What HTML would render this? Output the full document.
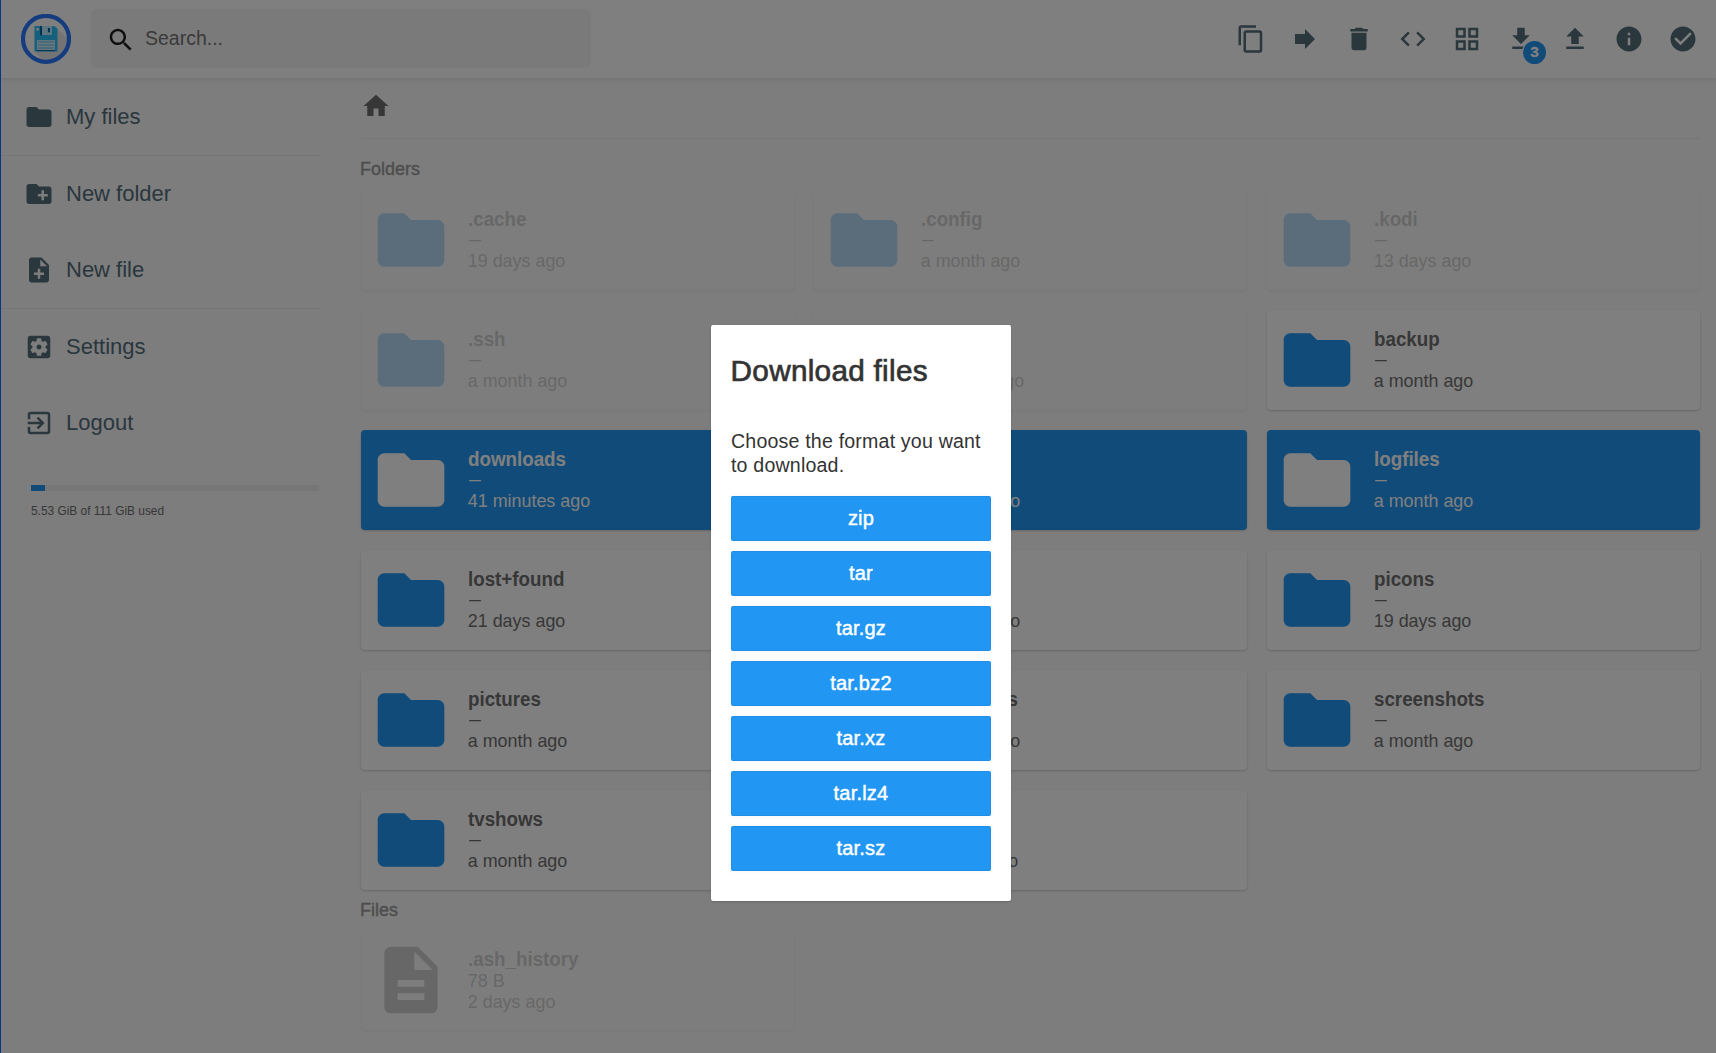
<!DOCTYPE html>
<html lang="en">
<head>
<meta charset="utf-8">
<title>File Browser</title>
<style>
*{box-sizing:border-box}
html,body{margin:0;padding:0}
body{width:1716px;height:1053px;overflow:hidden;position:relative;background:#fafafa;color:#333;font-family:"Liberation Sans",sans-serif;font-size:20px}
.abs,.abs-all>*{position:absolute}
svg{display:block}
/* header */
#header{position:absolute;left:1px;top:-1px;width:1719px;height:80px;background:#fff;border-bottom:1px solid rgba(0,0,0,.075);box-shadow:0 0 5px rgba(0,0,0,.1)}
#logo{position:absolute;left:20px;top:15px;width:50px;height:50px}
#search{position:absolute;left:90px;top:10px;width:500px;height:59px;background:#f5f5f5;border-radius:6px}
#search svg{position:absolute;left:15px;top:15.6px;width:30px;height:30px;fill:#000;opacity:.87}
#search span{position:absolute;left:54px;top:17px;line-height:24px;font-size:19.5px;color:#757575;white-space:nowrap}
.hi{position:absolute;top:25px;width:30px;height:30px;fill:#546e7a}
#badge{position:absolute;left:1521.8px;top:41.8px;width:23.3px;height:23.3px;border-radius:50%;background:#2196f3;color:#fff;font-size:15.4px;font-weight:bold;text-align:center;line-height:22.3px;box-shadow:0 0 0 1px #fff;-webkit-text-stroke:.3px #fff}
/* nav */
#nav{position:absolute;left:1px;top:79px;width:320px}
.na{position:absolute;left:0;width:320px;height:76px;color:#546e7a;font-size:22px}
.na svg{position:absolute;left:23px;top:23px;width:30px;height:30px;fill:#546e7a}
.na span{position:absolute;left:65px;top:23.8px;line-height:28px;white-space:nowrap}
.sep{position:absolute;left:0;width:320px;height:1px;background:rgba(0,0,0,.05)}
#usage-bar{position:absolute;left:30.2px;top:406.3px;width:288px;height:5.7px;background:rgba(0,0,0,.045)}
#usage-bar i{display:block;width:13.8px;height:5.7px;background:#2196f3}
#usage-txt{position:absolute;left:30px;top:424.6px;font-size:11.9px;line-height:14px;color:#6f6f6f;white-space:nowrap}
/* main */
#crumbs{position:absolute;left:361px;top:79px;width:1339px;height:60px;border-bottom:1px solid rgba(0,0,0,.05)}
#crumbs svg{position:absolute;left:.1px;top:12.1px;width:30px;height:30px;fill:#6f6f6f}
.h2{position:absolute;left:360px;font-size:18px;line-height:21px;color:#9b9b9b;font-weight:normal;white-space:nowrap;-webkit-text-stroke:.35px #9b9b9b}
.item{position:absolute;width:433.4px;height:100px;background:#fff;border-radius:4px;box-shadow:rgba(0,0,0,.06) 0 1px 3px,rgba(0,0,0,.12) 0 1px 2px;color:#6f6f6f}
.item svg{position:absolute;left:10px;top:10px;width:80px;height:80px;fill:#2196f3}
.item p{position:absolute;left:106.8px;margin:0;white-space:nowrap}
.item .name{top:16.8px;font-size:20px;line-height:24px;font-weight:bold;transform:scaleX(.938);transform-origin:0 50%}
.item .size{top:39.7px;font-size:17.9px;line-height:21px}
.item .mod{top:60.8px;font-size:17.9px;line-height:21px}
.item .size b{display:inline-block;font-weight:normal;transform:scaleX(.66);transform-origin:0 50%;position:relative;left:.9px;top:-.7px}
.item.sel{background:#2196f3;color:#fff}
.item.sel svg{fill:#fff}
.item.dim{opacity:.3}
.item.filei svg{fill:#6f6f6f}
.item.filei .size{top:40.5px}
.item.filei .mod{top:61.8px}
.c1{left:361px}.c2{left:814px}.c3{left:1267px}
.r1{top:190px}.r2{top:310px}.r3{top:430px}.r4{top:550px}.r5{top:670px}.r6{top:790px}.r7{top:930px}
/* overlay + modal */
#overlay{position:absolute;left:1px;top:0;width:1715px;height:1053px;background:rgba(0,0,0,.5)}
#winborder{position:absolute;left:0;top:0;width:1px;height:1053px;background:#0c3583}
#modal{position:absolute;left:711px;top:325px;width:300px;height:575.5px;background:#fff;border-radius:2px;box-shadow:rgba(0,0,0,.06) 0 1px 3px,rgba(0,0,0,.12) 0 1px 2px}
#modal h2{position:absolute;left:19.6px;top:28.1px;margin:0;font-size:29.7px;line-height:36px;font-weight:normal;color:#333;white-space:nowrap;-webkit-text-stroke:.7px #333;letter-spacing:.3px}
#modal p{position:absolute;left:20px;top:105.3px;margin:0;font-size:19.6px;line-height:23.2px;color:#333;white-space:nowrap;letter-spacing:.18px}
.btn{position:absolute;left:20px;width:260px;height:44.5px;background:#2196f3;border:1px solid rgba(0,0,0,.05);border-radius:2px;box-shadow:0 0 5px rgba(0,0,0,.05);color:#fff;text-align:center;font-size:20px;line-height:42.5px;-webkit-text-stroke:.45px #fff;letter-spacing:.2px}
</style>
</head>
<body>
<div id="header">
<svg id="logo" viewBox="0 0 50 50">
<defs><clipPath id="lc"><circle cx="25" cy="24.8" r="21.5"/></clipPath></defs>
<circle cx="25" cy="24.8" r="23" fill="#fff"/>
<g clip-path="url(#lc)"><path d="M13.5 37.5 L36.45 15 L60 38.6 L37 61z" fill="#000" opacity=".09"/></g>
<path d="M13.5 12h19.6l3.35 2.5v23H13.5z" fill="#28c0fb"/>
<rect x="19" y="12" width="2.1" height="9.4" fill="#0064a0"/>
<rect x="21.1" y="12" width="9.9" height="9" fill="#bcecff"/>
<rect x="26.9" y="14" width="2.1" height="4.3" fill="#0064a0"/>
<circle cx="16.5" cy="15.4" r="1.3" fill="#fff"/>
<rect x="16.1" y="26.1" width="17.8" height="10" fill="#cdf2ff"/>
<rect x="17.1" y="27.05" width="15.8" height="1.65" fill="#8cd0f4"/><rect x="17.1" y="30.2" width="15.8" height="1.6" fill="#8cd0f4"/><rect x="17.1" y="33.2" width="15.8" height="1.65" fill="#8cd0f4"/>
<rect x="16.1" y="36.1" width="17.8" height="1" fill="#0064a0"/>
<circle cx="25" cy="24.8" r="23" fill="none" stroke="#2979ff" stroke-width="4.2"/>
</svg>
<div id="search"><svg viewBox="0 0 24 24"><path d="M15.5 14h-.79l-.28-.27C15.41 12.59 16 11.11 16 9.5 16 5.91 13.09 3 9.5 3S3 5.91 3 9.5 5.91 16 9.5 16c1.61 0 3.09-.59 4.23-1.57l.27.28v.79l5 4.99L20.49 19l-4.99-5zm-6 0C7.01 14 5 11.99 5 9.5S7.01 5 9.5 5 14 7.01 14 9.5 11.99 14 9.5 14z"/></svg><span>Search...</span></div>
<svg class="hi" style="left:1235.1px" viewBox="0 0 24 24"><path d="M16 1H4c-1.1 0-2 .9-2 2v14h2V3h12V1zm3 4H8c-1.1 0-2 .9-2 2v14c0 1.1.9 2 2 2h11c1.1 0 2-.9 2-2V7c0-1.1-.9-2-2-2zm0 16H8V7h11v14z"/></svg>
<svg class="hi" style="left:1289.1px" viewBox="0 0 24 24"><path d="M12 8V4l8 8-8 8v-4H4V8z"/></svg>
<svg class="hi" style="left:1343.1px" viewBox="0 0 24 24"><path d="M6 19c0 1.1.9 2 2 2h8c1.1 0 2-.9 2-2V7H6v12zM19 4h-3.5l-1-1h-5l-1 1H5v2h14V4z"/></svg>
<svg class="hi" style="left:1397.1px" viewBox="0 0 24 24"><path d="M9.4 16.6L4.8 12l4.6-4.6L8 6l-6 6 6 6 1.4-1.4zm5.2 0l4.6-4.6-4.6-4.6L16 6l6 6-6 6-1.4-1.4z"/></svg>
<svg class="hi" style="left:1451.1px" viewBox="0 0 24 24"><path d="M3 3v8h8V3H3zm6 6H5V5h4v4zm-6 4v8h8v-8H3zm6 6H5v-4h4v4zm4-16v8h8V3h-8zm6 6h-4V5h4v4zm-6 4v8h8v-8h-8zm6 6h-4v-4h4v4z"/></svg>
<svg class="hi" style="left:1505.1px" viewBox="0 0 24 24"><path d="M19 9h-4V3H9v6H5l7 7 7-7zM5 18v2h14v-2H5z"/></svg>
<svg class="hi" style="left:1559.1px" viewBox="0 0 24 24"><path d="M9 16h6v-6h4l-7-7-7 7h4zm-4 2h14v2H5z"/></svg>
<svg class="hi" style="left:1613.1px" viewBox="0 0 24 24"><path d="M12 2C6.48 2 2 6.48 2 12s4.48 10 10 10 10-4.48 10-10S17.52 2 12 2zm1 15h-2v-6h2v6zm0-8h-2V7h2v2z"/></svg>
<svg class="hi" style="left:1667.1px" viewBox="0 0 24 24"><path d="M12 2C6.48 2 2 6.48 2 12s4.48 10 10 10 10-4.48 10-10S17.52 2 12 2zm-2 15l-5-5 1.41-1.41L10 14.17l7.59-7.59L19 8l-9 9z"/></svg>
<div id="badge">3</div>
</div>
<div id="nav">
<div class="na" style="top:0px"><svg viewBox="0 0 24 24"><path d="M10 4H4c-1.1 0-1.99.9-1.99 2L2 18c0 1.1.9 2 2 2h16c1.1 0 2-.9 2-2V8c0-1.1-.9-2-2-2h-8l-2-2z"/></svg><span>My files</span></div>
<div class="na" style="top:77px"><svg viewBox="0 0 24 24"><path d="M20 6h-8l-2-2H4c-1.11 0-1.99.89-1.99 2L2 18c0 1.11.89 2 2 2h16c1.11 0 2-.89 2-2V8c0-1.11-.89-2-2-2zm-1 8h-3v3h-2v-3h-3v-2h3V9h2v3h3v2z"/></svg><span>New folder</span></div>
<div class="na" style="top:153px"><svg viewBox="0 0 24 24"><path d="M14 2H6c-1.1 0-1.99.9-1.99 2L4 20c0 1.1.89 2 1.99 2H18c1.1 0 2-.9 2-2V8l-6-6zm2 14h-3v3h-2v-3H8v-2h3v-3h2v3h3v2zm-3-7V3.5L18.5 9H13z"/></svg><span>New file</span></div>
<div class="na" style="top:230px"><svg viewBox="0 0 24 24"><path d="M12 10c-1.1 0-2 .9-2 2s.9 2 2 2 2-.9 2-2-.9-2-2-2zm7-7H5c-1.11 0-2 .9-2 2v14c0 1.1.89 2 2 2h14c1.11 0 2-.9 2-2V5c0-1.1-.89-2-2-2zm-1.75 9c0 .23-.02.46-.05.68l1.48 1.16c.13.11.17.3.08.45l-1.4 2.42c-.09.15-.27.21-.43.15l-1.74-.7c-.36.28-.76.51-1.18.69l-.26 1.85c-.03.17-.18.3-.35.3h-2.8c-.17 0-.32-.13-.35-.29l-.26-1.85c-.43-.18-.82-.41-1.18-.69l-1.74.7c-.16.06-.34 0-.43-.15l-1.4-2.42c-.09-.15-.05-.34.08-.45l1.48-1.16c-.03-.23-.05-.46-.05-.69 0-.23.02-.46.05-.68l-1.48-1.16c-.13-.11-.17-.3-.08-.45l1.4-2.42c.09-.15.27-.21.43-.15l1.74.7c.36-.28.76-.51 1.18-.69l.26-1.85c.03-.17.18-.3.35-.3h2.8c.17 0 .32.13.35.29l.26 1.85c.43.18.82.41 1.18.69l1.74-.7c.16-.06.34 0 .43.15l1.4 2.42c.09.15.05.34-.08.45l-1.48 1.16c.03.23.05.46.05.69z"/></svg><span>Settings</span></div>
<div class="na" style="top:306px"><svg viewBox="0 0 24 24"><path d="M10.09 15.59L11.5 17l5-5-5-5-1.41 1.41L12.67 11H3v2h9.67l-2.58 2.59zM19 3H5c-1.11 0-2 .9-2 2v4h2V5h14v14H5v-4H3v4c0 1.1.89 2 2 2h14c1.1 0 2-.9 2-2V5c0-1.1-.9-2-2-2z"/></svg><span>Logout</span></div>
<div class="sep" style="top:76px"></div><div class="sep" style="top:229px"></div>
<div id="usage-bar"><i></i></div><div id="usage-txt">5.53 GiB of 111 GiB used</div>
</div>
<div id="main">
<div id="crumbs"><svg viewBox="0 0 24 24"><path d="M10 20v-6h4v6h5v-8h3L12 3 2 12h3v8z"/></svg></div>
<div class="h2" style="top:158.6px">Folders</div>
<div class="item r1 c1 dim"><svg viewBox="0 0 24 24"><path d="M10 4H4c-1.1 0-1.99.9-1.99 2L2 18c0 1.1.9 2 2 2h16c1.1 0 2-.9 2-2V8c0-1.1-.9-2-2-2h-8l-2-2z"/></svg><p class="name">.cache</p><p class="size"><b>—</b></p><p class="mod">19 days ago</p></div>
<div class="item r1 c2 dim"><svg viewBox="0 0 24 24"><path d="M10 4H4c-1.1 0-1.99.9-1.99 2L2 18c0 1.1.9 2 2 2h16c1.1 0 2-.9 2-2V8c0-1.1-.9-2-2-2h-8l-2-2z"/></svg><p class="name">.config</p><p class="size"><b>—</b></p><p class="mod">a month ago</p></div>
<div class="item r1 c3 dim"><svg viewBox="0 0 24 24"><path d="M10 4H4c-1.1 0-1.99.9-1.99 2L2 18c0 1.1.9 2 2 2h16c1.1 0 2-.9 2-2V8c0-1.1-.9-2-2-2h-8l-2-2z"/></svg><p class="name">.kodi</p><p class="size"><b>—</b></p><p class="mod">13 days ago</p></div>
<div class="item r2 c1 dim"><svg viewBox="0 0 24 24"><path d="M10 4H4c-1.1 0-1.99.9-1.99 2L2 18c0 1.1.9 2 2 2h16c1.1 0 2-.9 2-2V8c0-1.1-.9-2-2-2h-8l-2-2z"/></svg><p class="name">.ssh</p><p class="size"><b>—</b></p><p class="mod">a month ago</p></div>
<div class="item r2 c2 dim"><svg viewBox="0 0 24 24"><path d="M10 4H4c-1.1 0-1.99.9-1.99 2L2 18c0 1.1.9 2 2 2h16c1.1 0 2-.9 2-2V8c0-1.1-.9-2-2-2h-8l-2-2z"/></svg><p class="name">.update</p><p class="size"><b>—</b></p><p class="mod">a minute ago</p></div>
<div class="item r2 c3 "><svg viewBox="0 0 24 24"><path d="M10 4H4c-1.1 0-1.99.9-1.99 2L2 18c0 1.1.9 2 2 2h16c1.1 0 2-.9 2-2V8c0-1.1-.9-2-2-2h-8l-2-2z"/></svg><p class="name">backup</p><p class="size"><b>—</b></p><p class="mod">a month ago</p></div>
<div class="item r3 c1 sel"><svg viewBox="0 0 24 24"><path d="M10 4H4c-1.1 0-1.99.9-1.99 2L2 18c0 1.1.9 2 2 2h16c1.1 0 2-.9 2-2V8c0-1.1-.9-2-2-2h-8l-2-2z"/></svg><p class="name">downloads</p><p class="size"><b>—</b></p><p class="mod">41 minutes ago</p></div>
<div class="item r3 c2 sel"><svg viewBox="0 0 24 24"><path d="M10 4H4c-1.1 0-1.99.9-1.99 2L2 18c0 1.1.9 2 2 2h16c1.1 0 2-.9 2-2V8c0-1.1-.9-2-2-2h-8l-2-2z"/></svg><p class="name">emuelec</p><p class="size"><b>—</b></p><p class="mod">a month ago</p></div>
<div class="item r3 c3 sel"><svg viewBox="0 0 24 24"><path d="M10 4H4c-1.1 0-1.99.9-1.99 2L2 18c0 1.1.9 2 2 2h16c1.1 0 2-.9 2-2V8c0-1.1-.9-2-2-2h-8l-2-2z"/></svg><p class="name">logfiles</p><p class="size"><b>—</b></p><p class="mod">a month ago</p></div>
<div class="item r4 c1 "><svg viewBox="0 0 24 24"><path d="M10 4H4c-1.1 0-1.99.9-1.99 2L2 18c0 1.1.9 2 2 2h16c1.1 0 2-.9 2-2V8c0-1.1-.9-2-2-2h-8l-2-2z"/></svg><p class="name">lost+found</p><p class="size"><b>—</b></p><p class="mod">21 days ago</p></div>
<div class="item r4 c2 "><svg viewBox="0 0 24 24"><path d="M10 4H4c-1.1 0-1.99.9-1.99 2L2 18c0 1.1.9 2 2 2h16c1.1 0 2-.9 2-2V8c0-1.1-.9-2-2-2h-8l-2-2z"/></svg><p class="name">music</p><p class="size"><b>—</b></p><p class="mod">a month ago</p></div>
<div class="item r4 c3 "><svg viewBox="0 0 24 24"><path d="M10 4H4c-1.1 0-1.99.9-1.99 2L2 18c0 1.1.9 2 2 2h16c1.1 0 2-.9 2-2V8c0-1.1-.9-2-2-2h-8l-2-2z"/></svg><p class="name">picons</p><p class="size"><b>—</b></p><p class="mod">19 days ago</p></div>
<div class="item r5 c1 "><svg viewBox="0 0 24 24"><path d="M10 4H4c-1.1 0-1.99.9-1.99 2L2 18c0 1.1.9 2 2 2h16c1.1 0 2-.9 2-2V8c0-1.1-.9-2-2-2h-8l-2-2z"/></svg><p class="name">pictures</p><p class="size"><b>—</b></p><p class="mod">a month ago</p></div>
<div class="item r5 c2 "><svg viewBox="0 0 24 24"><path d="M10 4H4c-1.1 0-1.99.9-1.99 2L2 18c0 1.1.9 2 2 2h16c1.1 0 2-.9 2-2V8c0-1.1-.9-2-2-2h-8l-2-2z"/></svg><p class="name">recordings</p><p class="size"><b>—</b></p><p class="mod">a month ago</p></div>
<div class="item r5 c3 "><svg viewBox="0 0 24 24"><path d="M10 4H4c-1.1 0-1.99.9-1.99 2L2 18c0 1.1.9 2 2 2h16c1.1 0 2-.9 2-2V8c0-1.1-.9-2-2-2h-8l-2-2z"/></svg><p class="name">screenshots</p><p class="size"><b>—</b></p><p class="mod">a month ago</p></div>
<div class="item r6 c1 "><svg viewBox="0 0 24 24"><path d="M10 4H4c-1.1 0-1.99.9-1.99 2L2 18c0 1.1.9 2 2 2h16c1.1 0 2-.9 2-2V8c0-1.1-.9-2-2-2h-8l-2-2z"/></svg><p class="name">tvshows</p><p class="size"><b>—</b></p><p class="mod">a month ago</p></div>
<div class="item r6 c2 "><svg viewBox="0 0 24 24"><path d="M10 4H4c-1.1 0-1.99.9-1.99 2L2 18c0 1.1.9 2 2 2h16c1.1 0 2-.9 2-2V8c0-1.1-.9-2-2-2h-8l-2-2z"/></svg><p class="name">videos</p><p class="size"><b>—</b></p><p class="mod">19 days ago</p></div>
<div class="h2" style="top:899.7px">Files</div>
<div class="item r7 c1 dim filei"><svg viewBox="0 0 24 24"><path d="M14 2H6c-1.1 0-1.99.9-1.99 2L4 20c0 1.1.89 2 1.99 2H18c1.1 0 2-.9 2-2V8l-6-6zm2 16H8v-2h8v2zm0-4H8v-2h8v2zm-3-5V3.5L18.5 9H13z"/></svg><p class="name">.ash_history</p><p class="size">78 B</p><p class="mod">2 days ago</p></div>
</div>
<div id="overlay"></div>
<div id="modal">
<h2>Download files</h2>
<p>Choose the format you want<br>to download.</p>
<div class="btn" style="top:171.2px">zip</div>
<div class="btn" style="top:226.2px">tar</div>
<div class="btn" style="top:281.2px">tar.gz</div>
<div class="btn" style="top:336.3px">tar.bz2</div>
<div class="btn" style="top:391.3px">tar.xz</div>
<div class="btn" style="top:446.3px">tar.lz4</div>
<div class="btn" style="top:501.3px">tar.sz</div>
</div>
<div id="winborder"></div>
</body>
</html>
